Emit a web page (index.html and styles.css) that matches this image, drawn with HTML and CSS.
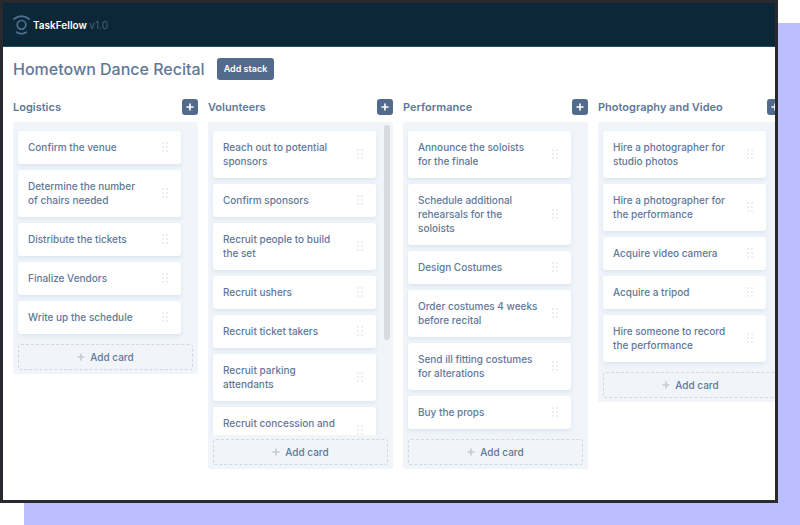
FILE: index.html
```html
<!DOCTYPE html>
<html lang="en">
<head>
<meta charset="utf-8">
<title>TaskFellow</title>
<link rel="stylesheet" href="styles.css">
</head>
<body>
<svg class="sprite" aria-hidden="true">
  <symbol id="grip" viewBox="0 0 6 10"><g fill="currentColor"><circle cx="1" cy="1" r=".9"/><circle cx="5" cy="1" r=".9"/><circle cx="1" cy="5" r=".9"/><circle cx="5" cy="5" r=".9"/><circle cx="1" cy="9" r=".9"/><circle cx="5" cy="9" r=".9"/></g></symbol>
  <symbol id="plus" viewBox="0 0 8 8"><path d="M4 1v6M1 4h6" fill="none" stroke="currentColor" stroke-width="1.6" stroke-linecap="round"/></symbol>
</svg>
<div class="window">
  <header class="topbar">
    <svg class="logo" viewBox="0 0 17 20" fill="none" stroke="#4f7292" stroke-width="1.7" stroke-linecap="round"><path d="M.9 4Q8.500-1.600 16.100 4"/><circle cx="8.500" cy="9.800" r="4.300"/><path d="M3.800 17.200Q8.500 20.300 13.200 17.200"/></svg>
    <span class="brand">TaskFellow <span class="version">v1.0</span></span>
  </header>
  <main class="page">
    <div class="heading">
      <h1>Hometown Dance Recital</h1>
      <button class="add-stack" type="button">Add stack</button>
    </div>
    <div class="board">
      <section class="stack">
        <div class="stack-head"><h2>Logistics</h2><button class="add" type="button" aria-label="Add card to Logistics"><svg><use href="#plus"/></svg></button></div>
        <div class="stack-body">
          <ul class="cards">
            <li class="card"><span>Confirm the venue</span><svg class="grip"><use href="#grip"/></svg></li>
            <li class="card"><span>Determine the number<br>of chairs needed</span><svg class="grip"><use href="#grip"/></svg></li>
            <li class="card"><span>Distribute the tickets</span><svg class="grip"><use href="#grip"/></svg></li>
            <li class="card"><span>Finalize Vendors</span><svg class="grip"><use href="#grip"/></svg></li>
            <li class="card"><span>Write up the schedule</span><svg class="grip"><use href="#grip"/></svg></li>
          </ul>
          <button class="add-card" type="button"><svg><use href="#plus"/></svg>Add card</button>
        </div>
      </section>
      <section class="stack">
        <div class="stack-head"><h2>Volunteers</h2><button class="add" type="button" aria-label="Add card to Volunteers"><svg><use href="#plus"/></svg></button></div>
        <div class="stack-body">
          <ul class="cards">
            <li class="card"><span>Reach out to potential sponsors</span><svg class="grip"><use href="#grip"/></svg></li>
            <li class="card"><span>Confirm sponsors</span><svg class="grip"><use href="#grip"/></svg></li>
            <li class="card"><span>Recruit people to build<br>the set</span><svg class="grip"><use href="#grip"/></svg></li>
            <li class="card"><span>Recruit ushers</span><svg class="grip"><use href="#grip"/></svg></li>
            <li class="card"><span>Recruit ticket takers</span><svg class="grip"><use href="#grip"/></svg></li>
            <li class="card"><span>Recruit parking<br>attendants</span><svg class="grip"><use href="#grip"/></svg></li>
            <li class="card"><span>Recruit concession and<br>&nbsp;</span><svg class="grip"><use href="#grip"/></svg></li>
          </ul>
          <div class="thumb"></div>
          <button class="add-card" type="button"><svg><use href="#plus"/></svg>Add card</button>
        </div>
      </section>
      <section class="stack">
        <div class="stack-head"><h2>Performance</h2><button class="add" type="button" aria-label="Add card to Performance"><svg><use href="#plus"/></svg></button></div>
        <div class="stack-body">
          <ul class="cards">
            <li class="card"><span>Announce the soloists<br>for the finale</span><svg class="grip"><use href="#grip"/></svg></li>
            <li class="card"><span>Schedule additional<br>rehearsals for the<br>soloists</span><svg class="grip"><use href="#grip"/></svg></li>
            <li class="card"><span>Design Costumes</span><svg class="grip"><use href="#grip"/></svg></li>
            <li class="card"><span>Order costumes 4 weeks before recital</span><svg class="grip"><use href="#grip"/></svg></li>
            <li class="card"><span>Send ill fitting costumes<br>for alterations</span><svg class="grip"><use href="#grip"/></svg></li>
            <li class="card"><span>Buy the props</span><svg class="grip"><use href="#grip"/></svg></li>
          </ul>
          <button class="add-card" type="button"><svg><use href="#plus"/></svg>Add card</button>
        </div>
      </section>
      <section class="stack">
        <div class="stack-head"><h2>Photography and Video</h2><button class="add" type="button" aria-label="Add card to Photography and Video"><svg><use href="#plus"/></svg></button></div>
        <div class="stack-body">
          <ul class="cards">
            <li class="card"><span>Hire a photographer for<br>studio photos</span><svg class="grip"><use href="#grip"/></svg></li>
            <li class="card"><span>Hire a photographer for<br>the performance</span><svg class="grip"><use href="#grip"/></svg></li>
            <li class="card"><span>Acquire video camera</span><svg class="grip"><use href="#grip"/></svg></li>
            <li class="card"><span>Acquire a tripod</span><svg class="grip"><use href="#grip"/></svg></li>
            <li class="card"><span>Hire someone to record<br>the performance</span><svg class="grip"><use href="#grip"/></svg></li>
          </ul>
          <button class="add-card" type="button"><svg><use href="#plus"/></svg>Add card</button>
        </div>
      </section>
    </div>
  </main>
</div>
</body>
</html>
```
FILE: styles.css
```css
* { box-sizing: border-box; }
body {
  margin: 0;
  height: 100vh;
  padding: 0 22px 22px 0;
  overflow: hidden;
  background: #fff;
  color: #5f7899;
  font-family: Inter, "Liberation Sans", sans-serif;
  font-size: 10px;
}
button { font-family: inherit; border: 0; padding: 0; cursor: pointer; }
h1, h2, ul { margin: 0; padding: 0; }
.sprite { position: absolute; width: 0; height: 0; }
.window {
  height: 100%;
  display: flex;
  flex-direction: column;
  overflow: hidden;
  border: 3px solid #292a30;
  background: #fff;
  box-shadow: 24px 23px 0 #bbbfff;
}
.topbar {
  flex: none;
  height: 44px;
  display: flex;
  align-items: center;
  gap: 3px;
  padding-left: 10px;
  background: #0c2737;
  border-bottom: 1px solid #28505c;
}
.logo { width: 17px; height: 20px; }
.brand { color: #fff; font-weight: 600; }
.version { color: #4a6178; font-weight: 400; }
.page {
  flex: 1;
  min-height: 0;
  display: flex;
  flex-direction: column;
  padding: 10px 0 31px 10px;
}
.heading { flex: none; display: flex; align-items: center; gap: 12px; height: 23px; }
h1 { font-size: 16px; line-height: 20px; font-weight: 500; }
.add-stack {
  height: 22px;
  padding: 0 7px;
  border-radius: 3px;
  background: #526b8c;
  color: #fff;
  font-size: 9px;
  font-weight: 600;
}
.board { flex: 1; min-height: 0; display: flex; gap: 10px; padding-top: 17px; }
.stack { flex: none; width: 185px; display: flex; flex-direction: column; min-height: 0; }
.stack-head {
  flex: none;
  height: 25px;
  padding-bottom: 5px;
  display: flex;
  align-items: center;
  justify-content: space-between;
}
h2 { font-size: 11px; line-height: 16px; font-weight: 600; white-space: nowrap; }
.add {
  width: 16px;
  height: 16px;
  border-radius: 3px;
  background: #526b8c;
  color: #fff;
  display: grid;
  place-items: center;
}
.add svg { width: 8px; height: 8px; }
.stack-body {
  position: relative;
  min-height: 0;
  display: flex;
  flex-direction: column;
  border-radius: 2px;
  background: #f1f5fa;
}
.cards {
  min-height: 0;
  overflow: hidden;
  display: flex;
  flex-direction: column;
  gap: 6px;
  padding: 9px 17px 6px 5px;
  list-style: none;
}
.card {
  flex: none;
  display: flex;
  align-items: center;
  justify-content: space-between;
  padding: 9px 13px 10px 10px;
  border-radius: 3px;
  background: #fff;
  box-shadow: 0 2px 4px #d9e5f0;
  font-weight: 500;
  line-height: 14px;
}
.card span { width: 128px; }
.grip { flex: none; width: 6px; height: 10px; color: #e4e6eb; }
.thumb {
  position: absolute;
  top: 3px;
  right: 3px;
  width: 6px;
  height: 62%;
  border-radius: 3px;
  background: #d9dadf;
}
.add-card {
  flex: none;
  height: 26px;
  margin: 4px 5px;
  display: flex;
  align-items: center;
  justify-content: center;
  gap: 5px;
  border: 1px dashed #d3d8de;
  border-radius: 3px;
  background: none;
  color: #5f7899;
  font-size: 10px;
  font-weight: 500;
}
.add-card svg { width: 8px; height: 8px; color: #c4cbd4; }
```
